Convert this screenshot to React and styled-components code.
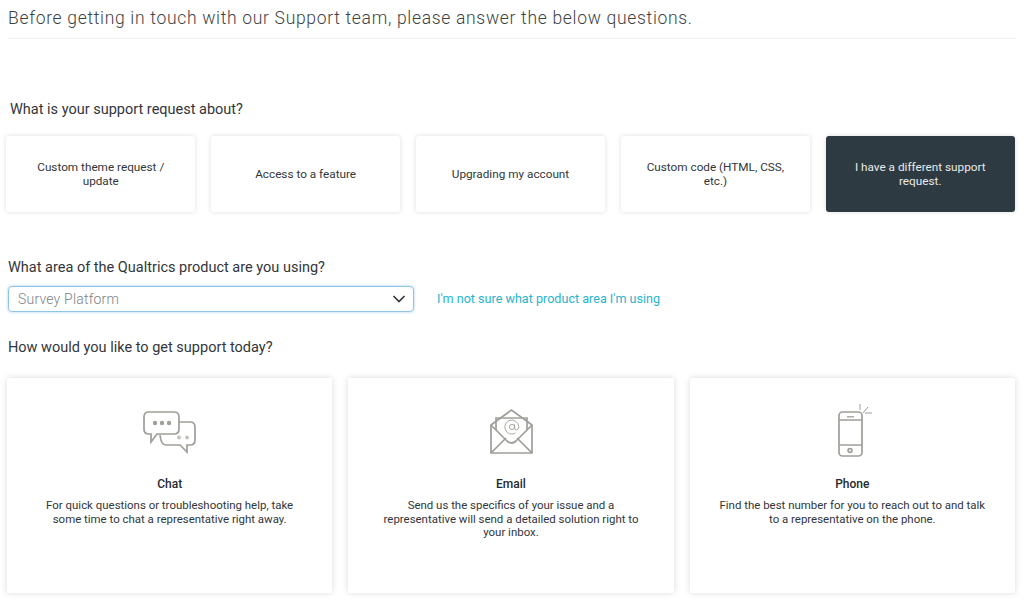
import React from 'react';
import styled, { createGlobalStyle } from 'styled-components';

const GlobalStyles = createGlobalStyle`
  html, body {
    margin: 0;
    padding: 0;
    background: #ffffff;
    font-family: 'Roboto', 'Liberation Sans', sans-serif;
    color: #32363a;
  }
`;

const Page = styled.div`
  width: 1024px;
  height: 601px;
  overflow: hidden;
  box-sizing: border-box;
  padding: 0 8px 0 6px;
`;

const Intro = styled.h1`
  margin: 0 0 0 2px;
  height: 39px;
  box-sizing: border-box;
  padding-top: 7px;
  font-size: 17.5px;
  line-height: 22px;
  font-weight: 300;
  letter-spacing: 0.69px;
  color: #3d4245;
  border-bottom: 1px solid #eeeeee;
`;

const Label = styled.h2`
  margin: ${({ $margin }) => $margin};
  font-size: 14.5px;
  line-height: 20px;
  font-weight: 400;
  color: #32363a;
`;

const TileRow = styled.div`
  display: grid;
  grid-template-columns: repeat(5, 1fr);
  gap: 15.4px;
  width: 1009px;
`;

const Tile = styled.div`
  height: 76px;
  box-sizing: border-box;
  padding: 0 22px;
  display: flex;
  align-items: center;
  justify-content: center;
  text-align: center;
  font-size: 11.75px;
  line-height: 14px;
  border-radius: 3px;
  background: ${({ $active }) => ($active ? '#2e3a41' : '#ffffff')};
  color: ${({ $active }) => ($active ? '#e8eaeb' : '#32363a')};
  box-shadow: 0 0 5px rgba(0, 0, 0, 0.13);
`;

const SelectRow = styled.div`
  display: flex;
  align-items: center;
  margin: 8px 0 0 2px;
`;

const Select = styled.div`
  width: 406px;
  height: 26px;
  box-sizing: border-box;
  padding: 0 7px 1px 9px;
  display: flex;
  align-items: center;
  justify-content: space-between;
  border: 1px solid #8fc4e4;
  border-radius: 4px;
  box-shadow: 0 0 3px rgba(90, 170, 220, 0.55);
  font-size: 14px;
  font-weight: 300;
  letter-spacing: 0.2px;
  color: #7d8285;
`;

const HelpLink = styled.a`
  margin: 0 0 2px 23px;
  font-size: 12.6px;
  color: #27b5ce;
`;

const CardRow = styled.div`
  display: grid;
  grid-template-columns: repeat(3, 1fr);
  gap: 16px;
  width: 1008px;
  margin-left: 1px;
`;

const Card = styled.div`
  height: 215px;
  box-sizing: border-box;
  padding: 10px 25px 0;
  display: flex;
  flex-direction: column;
  align-items: center;
  text-align: center;
  background: #ffffff;
  border-radius: 2px;
  box-shadow: 0 0 6px rgba(0, 0, 0, 0.15);
`;

const IconBox = styled.div`
  height: 88px;
  display: flex;
  align-items: center;
  justify-content: center;
`;

const CardTitle = styled.h3`
  margin: 0 0 7px;
  font-size: 12px;
  line-height: 16px;
  font-weight: 500;
  color: #26292c;
`;

const CardText = styled.p`
  margin: 0;
  font-size: 11.45px;
  line-height: 13.5px;
  color: #32363a;
`;

const Chevron = () => (
  <svg width="14" height="10" viewBox="0 0 14 10" fill="none" stroke="#33383b" strokeWidth="1.7">
    <path d="M1.5 2 L7 7.5 L12.5 2" />
  </svg>
);

const ChatIcon = () => (
  <svg width="56" height="48" viewBox="0 0 56 48" fill="none" stroke="#a09e98" strokeWidth="1.7">
    <path d="M7 4 H32 Q37 4 37 9 V21 Q37 26 32 26 H15 L9 34 V26 H7 Q2 26 2 21 V9 Q2 4 7 4 Z" />
    <path d="M37 14 H48 Q53 14 53 19 V32 Q53 37 48 37 H45 V44 L38 37 H24 Q19 37 18 27" />
    <g fill="#a09e98" stroke="none">
      <circle cx="13" cy="15" r="2.2" />
      <circle cx="20" cy="15" r="2.2" />
      <circle cx="27" cy="15" r="2.2" />
    </g>
    <g fill="#c4c2bd" stroke="none">
      <circle cx="37" cy="29.5" r="2" />
      <circle cx="45" cy="29.5" r="2" />
    </g>
  </svg>
);

const EmailIcon = () => (
  <svg width="44" height="48" viewBox="0 0 44 48" fill="none" stroke="#a09e98" strokeWidth="1.7">
    <path d="M2 17 V45 H43 V17 L22.5 2 Z" />
    <path d="M2 45 L17 30 M43 45 L28 30 M2 17 L18 33 Q22.5 37 27 33 L43 17" />
    <path d="M7 22 V10 H38 V22" />
    <g strokeWidth="0.9">
      <circle cx="23" cy="19" r="2.6" />
      <path d="M25.6 16.4 V20 Q25.6 22 27.6 22 Q29.8 21.4 29.8 18.5 A7 7 0 1 0 26.5 25" />
    </g>
  </svg>
);

const PhoneIcon = () => (
  <svg width="40" height="56" viewBox="0 0 40 56" fill="none" stroke="#a09e98" strokeWidth="1.7">
    <rect x="7" y="8" width="23" height="44" rx="3.5" />
    <path d="M7 16 H30 M7 41 H30" />
    <path d="M15 12.8 H22" strokeWidth="1.3" />
    <circle cx="18" cy="46.5" r="1.9" />
    <path d="M28 0 V6 M31 9 L36 3 M33 9 H40" strokeWidth="1" />
  </svg>
);

const tiles = [
  { text: 'Custom theme request / update' },
  { text: 'Access to a feature' },
  { text: 'Upgrading my account' },
  { text: 'Custom code (HTML, CSS, etc.)' },
  { text: 'I have a different support request.', active: true },
];

const cards = [
  {
    title: 'Chat',
    text: 'For quick questions or troubleshooting help, take some time to chat a representative right away.',
    icon: <ChatIcon />,
  },
  {
    title: 'Email',
    text: 'Send us the specifics of your issue and a representative will send a detailed solution right to your inbox.',
    icon: <EmailIcon />,
  },
  {
    title: 'Phone',
    text: 'Find the best number for you to reach out to and talk to a representative on the phone.',
    icon: <PhoneIcon />,
  },
];

const App = () => (
  <Page>
    <GlobalStyles />
    <Intro>Before getting in touch with our Support team, please answer the below questions.</Intro>

    <Label $margin="61px 0 16px 4px">What is your support request about?</Label>
    <TileRow>
      {tiles.map((tile) => (
        <Tile key={tile.text} $active={tile.active}>{tile.text}</Tile>
      ))}
    </TileRow>

    <Label $margin="46px 0 0 2px">What area of the Qualtrics product are you using?</Label>
    <SelectRow>
      <Select>
        Survey Platform
        <Chevron />
      </Select>
      <HelpLink>I'm not sure what product area I'm using</HelpLink>
    </SelectRow>

    <Label $margin="26px 0 20px 2px">How would you like to get support today?</Label>
    <CardRow>
      {cards.map((card) => (
        <Card key={card.title}>
          <IconBox>{card.icon}</IconBox>
          <CardTitle>{card.title}</CardTitle>
          <CardText>{card.text}</CardText>
        </Card>
      ))}
    </CardRow>
  </Page>
);

export default App;
